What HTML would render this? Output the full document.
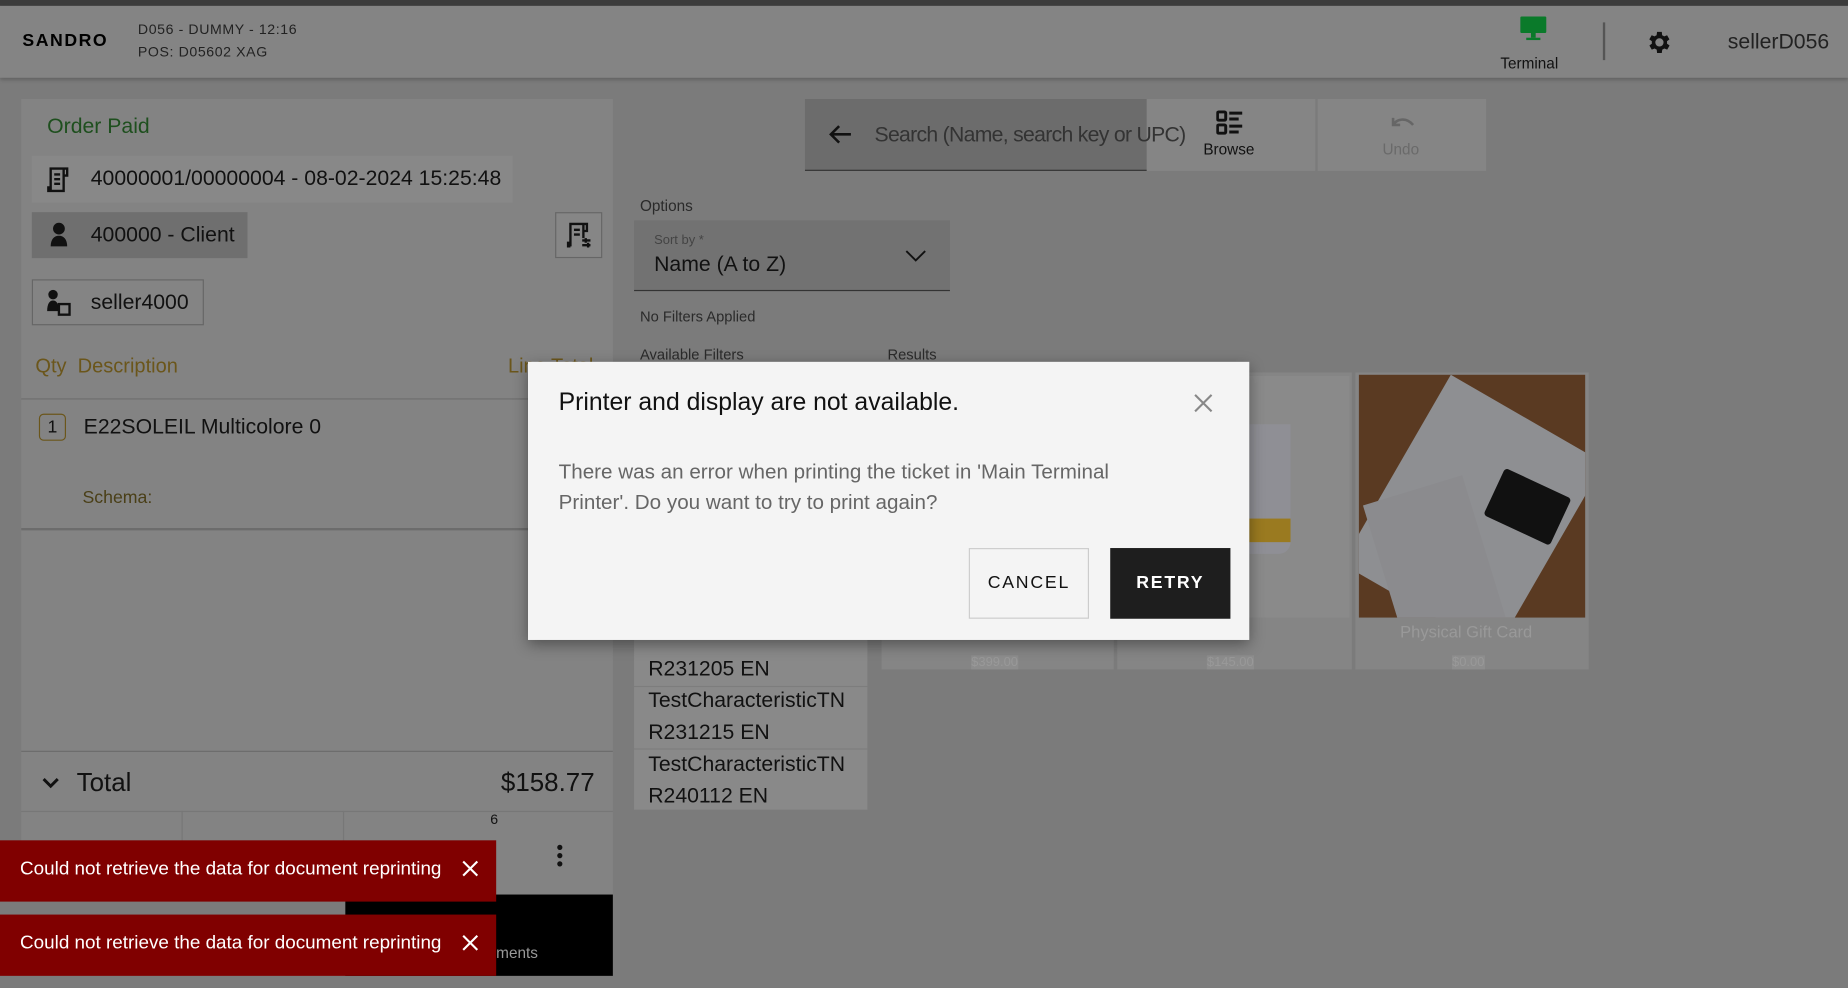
<!DOCTYPE html>
<html><head><meta charset="utf-8">
<style>
*{box-sizing:border-box;margin:0;padding:0}
html,body{width:1848px;height:988px;overflow:hidden;background:#7b7b7b;font-family:"Liberation Sans",sans-serif}
#w{position:absolute;left:0;top:0;width:1568px;height:838px;transform:scale(1.178571);transform-origin:0 0;background:#7b7b7b}
.a{position:absolute}
.t{position:absolute;white-space:nowrap}
</style></head><body><div id="w">
<div class="a" style="left:0;top:0;width:1568px;height:5px;background:#3c3c3c"></div>
<div class="a" style="left:0;top:5px;width:1568px;height:61px;background:#848484;box-shadow:0 2px 3px rgba(0,0,0,.2)"></div>
<div class="t" style="left:19px;top:26px;font-size:15px;font-weight:900;letter-spacing:1.3px;color:#000">SANDRO</div>
<div class="t" style="left:117px;top:18px;font-size:12px;color:#222;letter-spacing:.5px">D056 - DUMMY - 12:16</div>
<div class="t" style="left:117px;top:37px;font-size:12px;color:#222;letter-spacing:.5px">POS: D05602 XAG</div>
<svg class="a" style="left:1289px;top:13px" width="24" height="22" viewBox="0 0 24 22"><rect x="1" y="1" width="22" height="14" rx="1" fill="#0a7a2a"/><rect x="10" y="15" width="4" height="4" fill="#0a7a2a"/><rect x="6" y="19" width="12" height="2" fill="#0a7a2a"/></svg>
<div class="t" style="left:1273px;top:46px;font-size:13px;color:#111">Terminal</div>
<div class="a" style="left:1360px;top:19px;width:2px;height:32px;background:#555"></div>
<svg class="a" style="left:1396px;top:24px" width="24" height="24" viewBox="0 0 24 24"><path fill="#111" d="M19.4 13a7.5 7.5 0 000-2l2.1-1.6-2-3.5-2.5 1a7 7 0 00-1.7-1L15 3h-4l-.4 2.9a7 7 0 00-1.7 1l-2.5-1-2 3.5L6.6 11a7.5 7.5 0 000 2l-2.1 1.6 2 3.5 2.5-1a7 7 0 001.7 1L11 21h4l.4-2.9a7 7 0 001.7-1l2.5 1 2-3.5zM13 15.5A3.5 3.5 0 1113 8.5a3.5 3.5 0 010 7z" transform="translate(-1 0)"/></svg>
<div class="t" style="left:1466px;top:25px;font-size:18px;color:#222">sellerD056</div>

<div class="a" style="left:18px;top:84px;width:502px;height:676px;background:#838383"></div>
<div class="t" style="left:40px;top:97px;font-size:18px;color:#1e4f1e">Order Paid</div>
<div class="a" style="left:27px;top:132px;width:408px;height:40px;background:#888"></div>
<svg class="a" style="left:38px;top:140px" width="22" height="24" viewBox="0 0 22 24" fill="none" stroke="#111" stroke-width="2"><path d="M5 22V3h11v19H3v-3h2M16 3h3v6h-3M8 8h5M8 12h5M8 16h5"/></svg>
<div class="t" style="left:77px;top:141px;font-size:18px;color:#111">40000001/00000004 - 08-02-2024 15:25:48</div>
<div class="a" style="left:27px;top:180px;width:183px;height:39px;background:#6f6f6f"></div>
<svg class="a" style="left:40px;top:188px" width="20" height="22" viewBox="0 0 20 22"><circle cx="10" cy="6" r="5" fill="#111"/><path d="M3 21c0-6 3-9 7-9s7 3 7 9z" fill="#111"/></svg>
<div class="t" style="left:77px;top:189px;font-size:18px;color:#111">400000 - Client</div>
<div class="a" style="left:471px;top:180px;width:40px;height:39px;border:1px solid #666;background:#868686"></div>
<svg class="a" style="left:479px;top:187px" width="24" height="26" viewBox="0 0 24 26" fill="none" stroke="#111" stroke-width="2"><path d="M5 22V3h11v12M16 3h3v6h-3M8 8h5M8 12h5M5 22H3v-3h2M15 17h7M15 21h7M18 15v4M20 19v4"/></svg>
<div class="a" style="left:27px;top:237px;width:146px;height:39px;border:1px solid #666;background:#848484"></div>
<svg class="a" style="left:38px;top:244px" width="24" height="26" viewBox="0 0 24 26"><circle cx="7" cy="6" r="4" fill="#111"/><path d="M2 20c0-6 2-9 5-9s5 3 5 9z" fill="#111"/><rect x="12" y="14" width="9" height="9" fill="none" stroke="#111" stroke-width="2"/></svg>
<div class="t" style="left:77px;top:246px;font-size:18px;color:#111">seller4000</div>
<div class="t" style="left:30px;top:301px;font-size:17px;color:#6b561b">Qty&nbsp;&nbsp;Description</div>
<div class="t" style="left:431px;top:301px;font-size:17px;color:#6b561b">Line Total</div>
<div class="a" style="left:18px;top:338px;width:502px;height:1px;background:#6e6e6e"></div>
<div class="a" style="left:33px;top:351px;width:23px;height:23px;border:1px solid #6b561b;border-radius:4px;font-size:15px;text-align:center;line-height:21px;color:#111">1</div>
<div class="t" style="left:71px;top:352px;font-size:18px;color:#111">E22SOLEIL Multicolore 0</div>
<div class="t" style="left:70px;top:414px;font-size:15px;color:#4a3f17">Schema:</div>
<div class="a" style="left:18px;top:448px;width:502px;height:2px;background:#6c6c6c"></div>
<div class="a" style="left:18px;top:637px;width:502px;height:1px;background:#6c6c6c"></div>
<svg class="a" style="left:35px;top:658px" width="16" height="12" viewBox="0 0 16 12"><path d="M2 3l6 6 6-6" fill="none" stroke="#111" stroke-width="2.5"/></svg>
<div class="t" style="left:65px;top:651px;font-size:22px;color:#111">Total</div>
<div class="t" style="left:425px;top:651px;font-size:22px;color:#111">$158.77</div>
<div class="a" style="left:18px;top:688px;width:502px;height:1px;background:#777"></div>
<div class="a" style="left:154px;top:688px;width:1px;height:72px;background:#777"></div>
<div class="a" style="left:291px;top:688px;width:1px;height:72px;background:#777"></div>
<div class="t" style="left:416px;top:688px;font-size:12px;color:#111">6</div>
<svg class="a" style="left:471px;top:716px" width="8" height="20" viewBox="0 0 8 20"><circle cx="4" cy="3" r="2.2" fill="#111"/><circle cx="4" cy="10" r="2.2" fill="#111"/><circle cx="4" cy="17" r="2.2" fill="#111"/></svg>
<div class="a" style="left:293px;top:759px;width:227px;height:69px;background:#000"></div>
<div class="t" style="left:421px;top:801px;font-size:13px;color:#999">ments</div>

<div class="a" style="left:683px;top:84px;width:290px;height:61px;background:#6c6c6c;border-bottom:1px solid #333"></div>
<div class="a" style="left:973px;top:84px;width:143px;height:61px;background:#858585"></div>
<svg class="a" style="left:702px;top:104px" width="22" height="20" viewBox="0 0 22 20"><path d="M20 10H3M10 3l-7 7 7 7" fill="none" stroke="#111" stroke-width="2.2"/></svg>
<div class="t" style="left:742px;top:104px;font-size:18px;color:#333;letter-spacing:-.6px">Search (Name, search key or UPC)</div>
<svg class="a" style="left:1032px;top:93px" width="24" height="22" viewBox="0 0 24 22"><rect x="1" y="2" width="7" height="7" rx="1" fill="none" stroke="#111" stroke-width="2.5"/><rect x="1" y="13" width="7" height="7" rx="1" fill="none" stroke="#111" stroke-width="2.5"/><path d="M11 3h11M11 8h8M11 14h11M11 19h8" stroke="#111" stroke-width="2.5"/></svg>
<div class="t" style="left:1021px;top:119px;font-size:13px;color:#111">Browse</div>
<div class="a" style="left:1118px;top:84px;width:143px;height:61px;background:#858585"></div>
<svg class="a" style="left:1178px;top:96px" width="24" height="14" viewBox="0 0 24 14"><path d="M4 4v6h6M4 10c3-5 11-7 17 0" fill="none" stroke="#666" stroke-width="2.2"/></svg>
<div class="t" style="left:1173px;top:119px;font-size:13px;color:#6a6a6a">Undo</div>
<div class="t" style="left:543px;top:167px;font-size:13px;color:#2a2a2a">Options</div>
<div class="a" style="left:538px;top:187px;width:268px;height:60px;background:#727272;border-bottom:1px solid #333"></div>
<div class="t" style="left:555px;top:198px;font-size:11px;color:#444">Sort by *</div>
<div class="t" style="left:555px;top:214px;font-size:18px;color:#111">Name (A to Z)</div>
<svg class="a" style="left:767px;top:210px" width="20" height="14" viewBox="0 0 20 14"><path d="M2 3l8 8 8-8" fill="none" stroke="#111" stroke-width="1.6"/></svg>
<div class="t" style="left:543px;top:262px;font-size:12.5px;color:#2a2a2a">No Filters Applied</div>
<div class="t" style="left:543px;top:294px;font-size:12.5px;color:#2a2a2a">Available Filters</div>
<div class="t" style="left:753px;top:294px;font-size:12.5px;color:#2a2a2a">Results</div>
<div class="a" style="left:538px;top:520px;width:198px;height:167px;background:#898989"></div>
<div class="a" style="left:538px;top:582px;width:198px;height:1px;background:#7d7d7d"></div>
<div class="a" style="left:538px;top:635px;width:198px;height:1px;background:#7d7d7d"></div>
<div class="t" style="left:550px;top:557px;font-size:18px;color:#111">R231205 EN</div>
<div class="t" style="left:550px;top:584px;font-size:18px;color:#111">TestCharacteristicTN</div>
<div class="t" style="left:550px;top:611px;font-size:18px;color:#111">R231215 EN</div>
<div class="t" style="left:550px;top:638px;font-size:18px;color:#111">TestCharacteristicTN</div>
<div class="t" style="left:550px;top:665px;font-size:18px;color:#111">R240112 EN</div>
<div class="a" style="left:748px;top:316px;width:197px;height:252px;background:#858585"></div>
<div class="a" style="left:948px;top:316px;width:199px;height:252px;background:#858585"></div>
<div class="a" style="left:952px;top:319px;width:193px;height:205px;background:#8a8a8a"></div>
<div class="a" style="left:1060px;top:360px;width:35px;height:110px;background:#8f8f95;border-radius:0 0 10px 0"></div>
<div class="a" style="left:1060px;top:440px;width:35px;height:20px;background:#9a7a20"></div>
<div class="a" style="left:1150px;top:316px;width:198px;height:252px;background:#858585"></div>
<div class="a" style="left:1153px;top:318px;width:192px;height:206px;background:#5a3a22;overflow:hidden">
<div class="a" style="left:78px;top:0;width:150px;height:185px;background:#8e8f92;transform:rotate(30deg);transform-origin:0 0"></div>
<div class="a" style="left:22px;top:95px;width:88px;height:140px;background:#8b8b8e;transform:rotate(-17deg)"></div>
<div class="a" style="left:112px;top:90px;width:62px;height:44px;background:#111;transform:rotate(25deg);border-radius:3px"></div>
</div>
<div class="t" style="left:1188px;top:528px;font-size:14px;color:#999">Physical Gift Card</div>
<div class="t" style="left:824px;top:556px;font-size:11px;color:#999;background:#8d8d8d">$399.00</div>
<div class="t" style="left:1024px;top:556px;font-size:11px;color:#999;background:#8d8d8d">$145.00</div>
<div class="t" style="left:1232px;top:556px;font-size:11px;color:#999;background:#8d8d8d">$0.00</div>

<div class="a" style="left:448px;top:307px;width:612px;height:236px;background:#f4f4f4;box-shadow:0 4px 12px rgba(0,0,0,.4)"></div>
<div class="t" style="left:474px;top:330px;font-size:21px;color:#111">Printer and display are not available.</div>
<svg class="a" style="left:1013px;top:334px" width="16" height="16" viewBox="0 0 16 16"><path d="M1 1l14 14M15 1L1 15" stroke="#888" stroke-width="1.8"/></svg>
<div class="t" style="left:474px;top:387px;font-size:17.5px;color:#666;line-height:26px">There was an error when printing the ticket in 'Main Terminal<br>Printer'. Do you want to try to print again?</div>
<div class="a" style="left:822px;top:465px;width:102px;height:60px;border:1px solid #ccc;font-size:15px;letter-spacing:1.5px;text-align:center;line-height:58px;color:#111">CANCEL</div>
<div class="a" style="left:942px;top:465px;width:102px;height:60px;background:#1e1e1e;font-size:15px;letter-spacing:1.5px;text-align:center;line-height:60px;color:#fff;font-weight:bold">RETRY</div>

<div class="a" style="left:0;top:713px;width:421px;height:52px;background:#800000"></div>
<div class="t" style="left:17px;top:729px;font-size:16px;color:#fff">Could not retrieve the data for document reprinting</div>
<svg class="a" style="left:392px;top:730px" width="14" height="14" viewBox="0 0 14 14"><path d="M1 1l12 12M13 1L1 13" stroke="#fff" stroke-width="1.8"/></svg>
<div class="a" style="left:0;top:776px;width:421px;height:52px;background:#800000"></div>
<div class="t" style="left:17px;top:792px;font-size:16px;color:#fff">Could not retrieve the data for document reprinting</div>
<svg class="a" style="left:392px;top:793px" width="14" height="14" viewBox="0 0 14 14"><path d="M1 1l12 12M13 1L1 13" stroke="#fff" stroke-width="1.8"/></svg>
</div></body></html>
